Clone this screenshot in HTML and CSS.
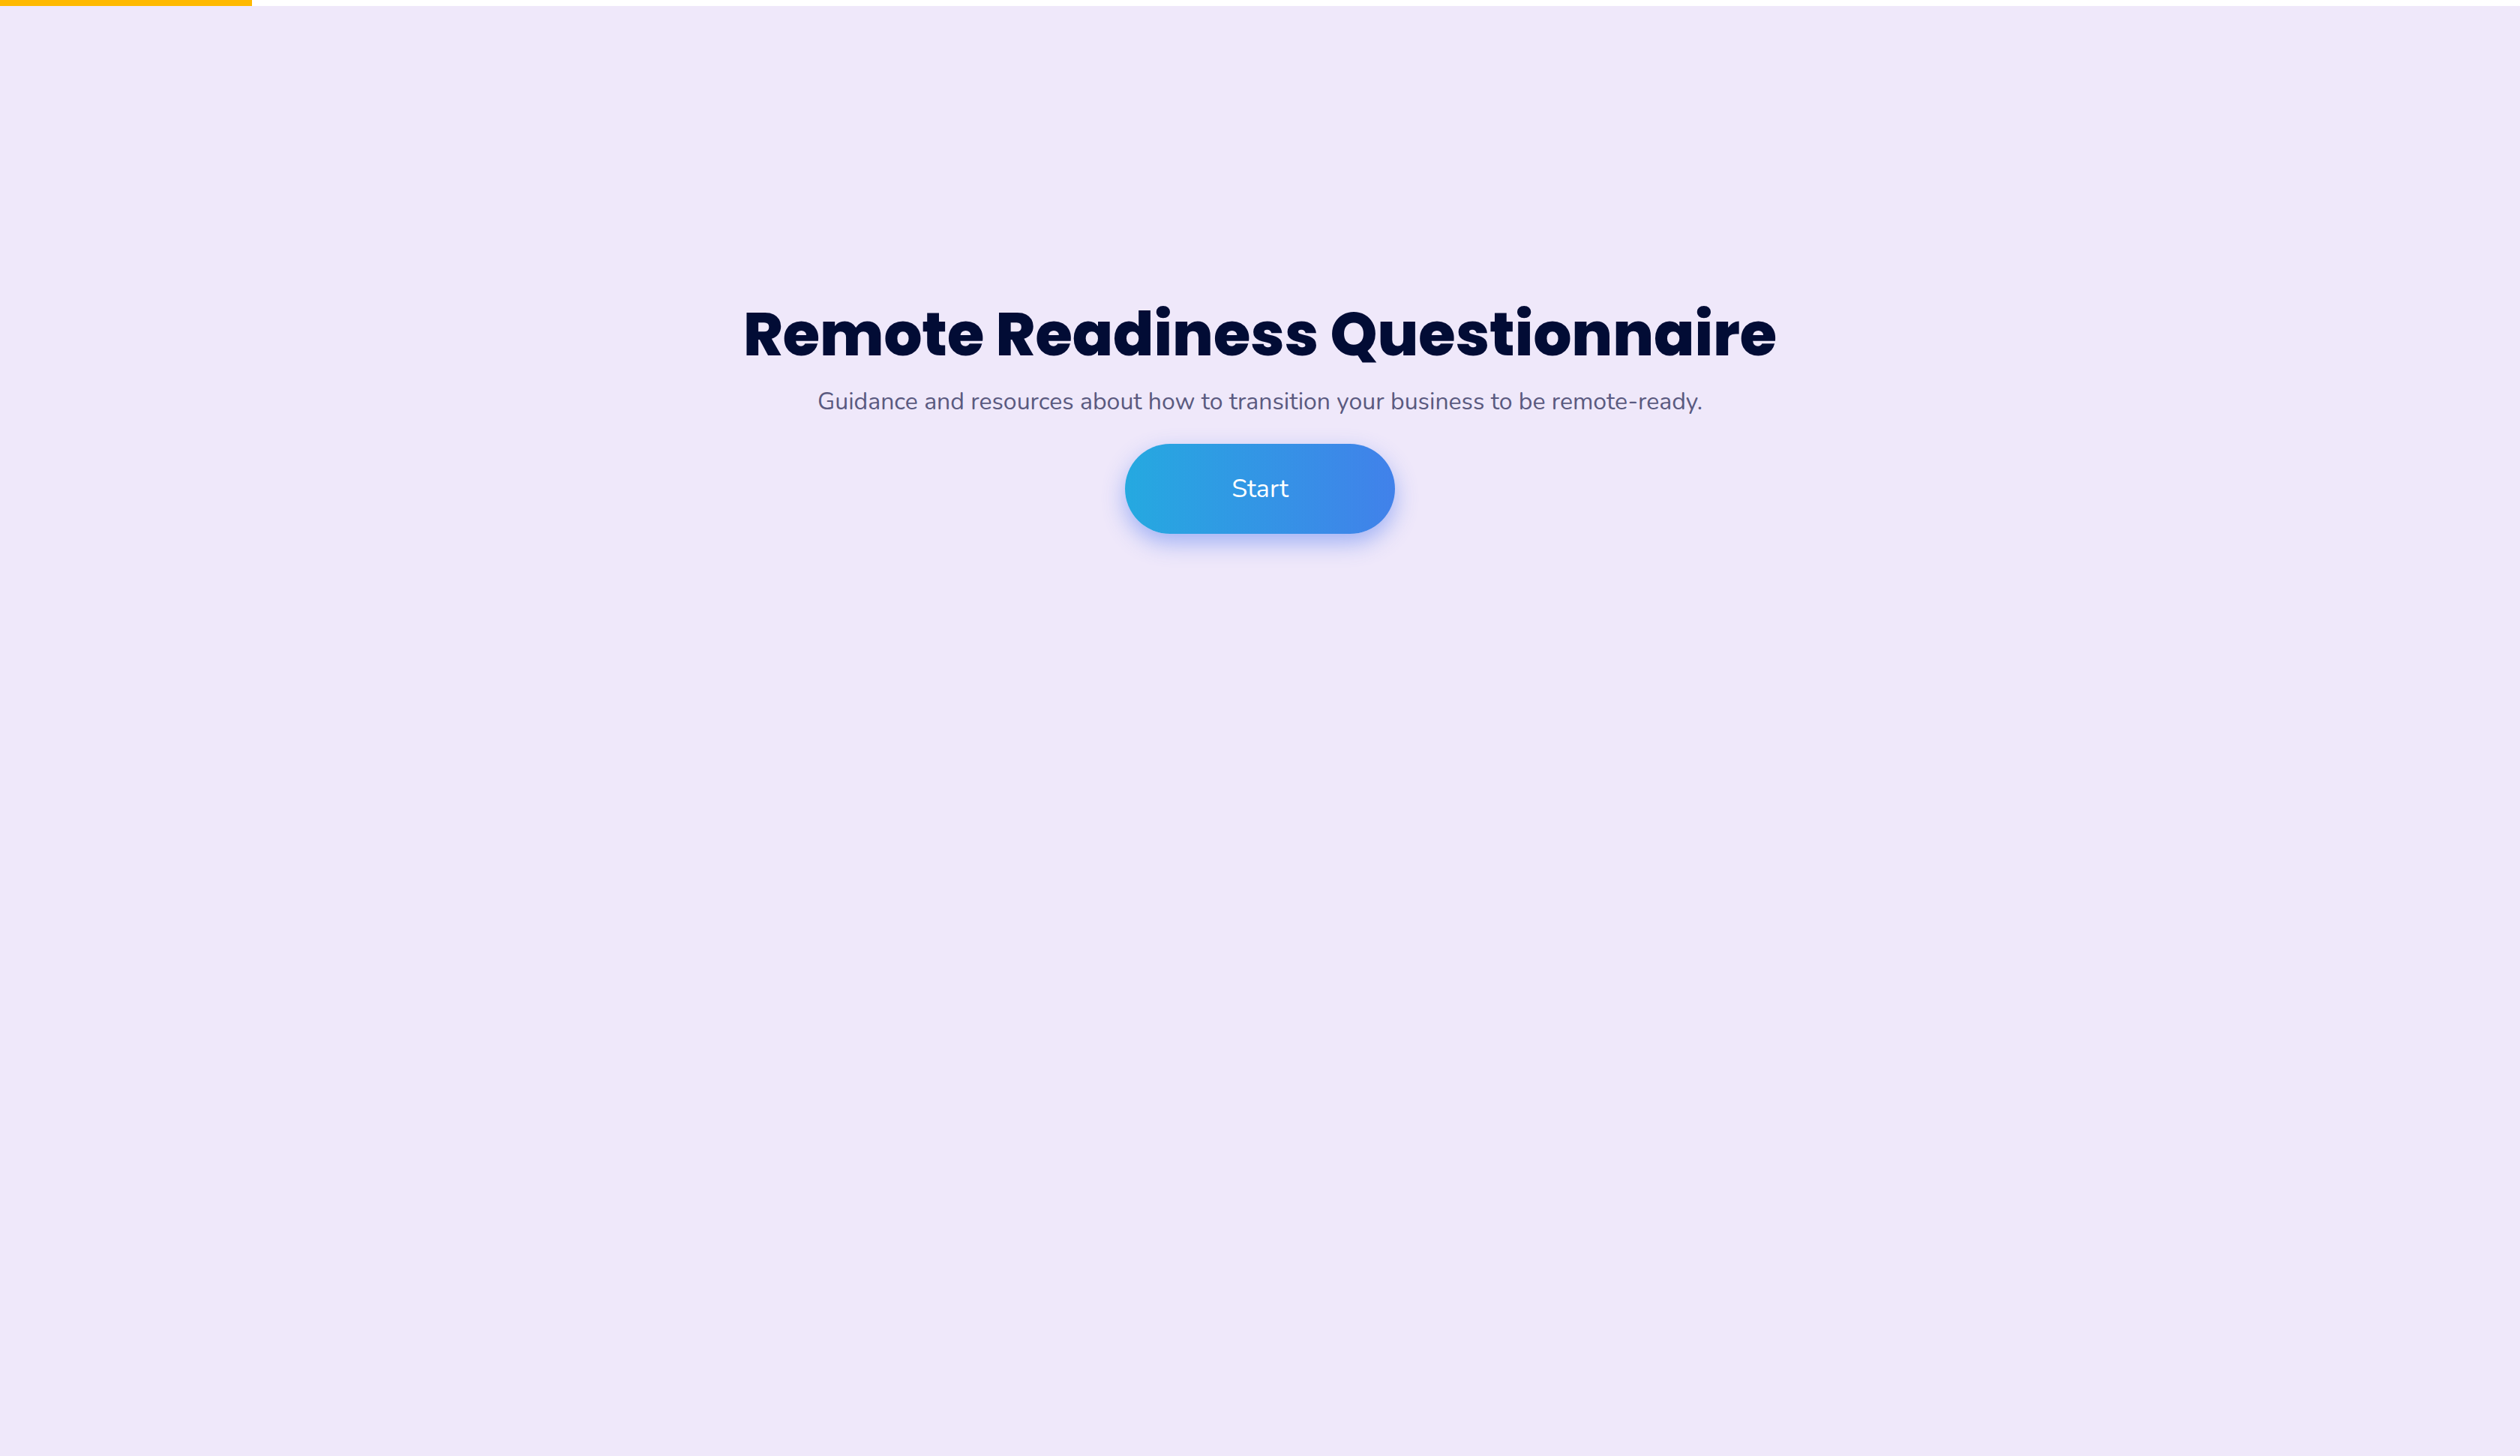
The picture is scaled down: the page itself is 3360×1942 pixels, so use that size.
FILE: index.html
```html
<!DOCTYPE html>
<html lang="en">
<head>
    <meta charset="UTF-8">
    <meta name="viewport" content="width=device-width, initial-scale=1.0">
    <title>Remote Readiness Questionnaire</title>
    <link rel="stylesheet" href="styles.css">
</head>
<body>
    <div class="progress">
        <div class="progress-fill"></div>
    </div>

    <main class="intro">
        <h1>Remote Readiness Questionnaire</h1>
        <p>Guidance and resources about how to transition your business to be remote-ready.</p>
        <button type="button" class="start-btn">Start</button>
    </main>
</body>
</html>
```

FILE: styles.css
```css
* {
    margin: 0;
    padding: 0;
    box-sizing: border-box;
}

body {
    font-family: 'Nunito', 'Lato', 'Open Sans', sans-serif;
    background: #efe8fa;
    min-height: 100vh;
}

.progress {
    height: 8px;
    background: #ffffff;
}

.progress-fill {
    width: 336px;
    height: 100%;
    background: #ffb900;
}

.intro {
    display: flex;
    flex-direction: column;
    align-items: center;
    padding-top: 390px;
    text-align: center;
}

.intro h1 {
    font-family: 'Poppins', 'Inter', sans-serif;
    font-weight: 800;
    font-size: 80px;
    line-height: 96px;
    color: #020c35;
}

.intro p {
    margin-top: 20px;
    font-size: 32px;
    line-height: 44px;
    color: #5a5a80;
}

.start-btn {
    margin-top: 34px;
    width: 360px;
    height: 120px;
    border: none;
    border-radius: 60px;
    background: linear-gradient(90deg, #25a9e0 0%, #4181ea 100%);
    color: #ffffff;
    font-family: inherit;
    font-size: 34px;
    box-shadow: 0 12px 30px rgba(65, 110, 240, 0.45);
    cursor: pointer;
}
```
